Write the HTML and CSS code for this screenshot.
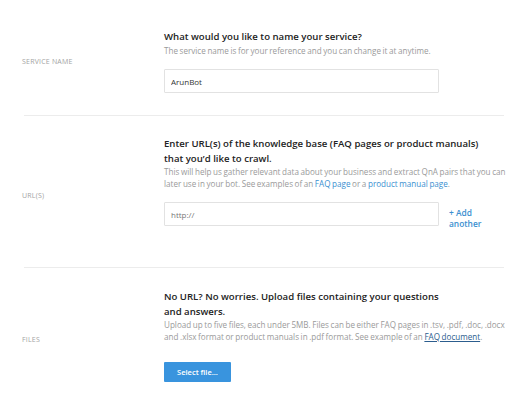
FILE: index.html
```html
<!DOCTYPE html>
<html>
<head>
<meta charset="utf-8">
<link rel="stylesheet" href="styles.css">
</head>
<body>
<div class="page">
  <section class="row row-first">
    <div class="label">SERVICE NAME</div>
    <div class="content">
      <h2 class="title">What would you like to name your service?</h2>
      <p class="desc">The service name is for your reference and you can change it at anytime.</p>
      <div class="field"><input class="input" type="text" value="ArunBot"></div>
    </div>
  </section>
  <section class="row row-url">
    <div class="label">URL(S)</div>
    <div class="content">
      <h2 class="title">Enter URL(s) of the knowledge base (FAQ pages or product manuals) that you’d like to crawl.</h2>
      <p class="desc">This will help us gather relevant data about your business and extract QnA pairs that you can<br>later use in your bot. See examples of an <a class="link">FAQ page</a> or a <a class="link">product manual page</a>.</p>
      <div class="field"><input class="input placeholder" type="text" placeholder="http://"><a class="add">+ Add<br>another</a></div>
    </div>
  </section>
  <section class="row row-files">
    <div class="label">FILES</div>
    <div class="content">
      <h2 class="title narrow">No URL? No worries. Upload files containing your questions and answers.</h2>
      <p class="desc">Upload up to five files, each under 5MB. Files can be either FAQ pages in .tsv, .pdf, .doc, .docx<br>and .xlsx format or product manuals in .pdf format. See example of an <a class="doc">FAQ document</a>.</p>
      <div class="field field-btn"><button class="btn">Select file...</button></div>
    </div>
  </section>
</div>
</body>
</html>
```

FILE: styles.css
```css
* { box-sizing: border-box; }
html, body { margin: 0; padding: 0; background: #fff; }
body { font-family: "Open Sans", "Noto Sans", sans-serif; color: #222; }
.page { padding: 0 10px 0 24px; }
.row {
  display: flex;
  align-items: center;
  border-bottom: 1px solid #ececec;
}
.row-first .content { padding: 30px 0 22px; }
.row-url .content { padding: 21px 0 38px; }
.row-files .content { padding: 22px 0 20px; }
.row-files { border-bottom: none; }
.label {
  width: 142px;
  flex: none;
  font-size: 7px;
  letter-spacing: 0.2px;
  color: #a3a3a3;
  margin-left: -2px;
  padding-top: 8px;
}
.content { flex: 1; min-width: 0; }
.title {
  margin: 0;
  font-size: 9.6px;
  font-weight: 600;
  line-height: 14.5px;
  color: #222;
  max-width: 330px;
}
.title.narrow { max-width: 285px; }
.desc {
  margin: 0 -10px 0 0;
  font-size: 8.1px;
  word-spacing: -0.5px;
  line-height: 11.5px;
  color: #9a9a9a;
  white-space: nowrap;
}
.link { color: #3a8fd0; }
.doc { color: #2c5d8e; text-decoration: underline; }
.field { display: flex; align-items: flex-start; margin-top: 13px; }
.field-btn { margin-top: 20px; }
.input {
  width: 275px;
  height: 24px;
  border: 1px solid #e2e2e2;
  border-radius: 1px;
  padding: 0 6px;
  font-family: inherit;
  font-size: 8px;
  color: #333;
  outline: none;
}
.input::placeholder { color: #777; }
.add {
  margin-left: 10px;
  margin-top: 5px;
  font-size: 8.4px;
  font-weight: 600;
  line-height: 11px;
  color: #3a8fd0;
}
.btn {
  width: 67px;
  height: 20px;
  background: #3994de;
  color: #fff;
  border: none;
  border-radius: 1px;
  font-family: inherit;
  font-size: 7.5px;
  font-weight: 600;
  padding: 0;
}
```
